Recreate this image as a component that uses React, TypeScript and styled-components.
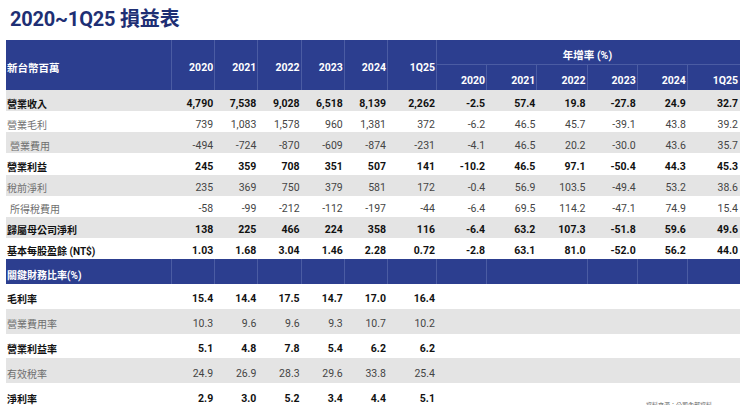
import React from "react";
import styled, { createGlobalStyle } from "styled-components";

const COLS = "166px repeat(5, 43.2px) 49px repeat(5, 50.2px) 1fr";
const FONT = `"Roboto", "Noto Sans CJK TC", sans-serif`;
const BLUE = "#2c3e8f";
const LINE = "#4b5ca3";

const Global = createGlobalStyle`
  html, body { margin: 0; padding: 0; background: #fff; }
  body { font-family: ${FONT}; width: 740px; height: 405px; overflow: hidden; }
`;

const Page = styled.div`
  padding-left: 6px;
`;

const Title = styled.h1`
  margin: 0;
  height: 40px;
  box-sizing: border-box;
  padding: 7px 0 0 4px;
  font: 700 20px/24px ${FONT};
  color: #1e2f74;
  letter-spacing: -0.2px;
`;

const Header = styled.div`
  display: grid;
  grid-template-columns: ${COLS};
  grid-template-rows: 25px 25px;
  background: ${BLUE};
  color: #fff;
  font-weight: 700;
  font-size: 10.5px;
`;

const HCell = styled.div<{ $row: string; $col: string; $align?: "left" | "right" | "center"; $split?: boolean; $last?: boolean }>`
  grid-row: ${(p) => p.$row};
  grid-column: ${(p) => p.$col};
  display: flex;
  align-items: center;
  justify-content: ${(p) => (p.$align === "left" ? "flex-start" : p.$align === "center" ? "center" : "flex-end")};
  padding: 5px ${(p) => (p.$last ? "2px" : "1px")} 0 ${(p) => (p.$align === "left" ? "1px" : "0")};
  border-right: ${(p) => (p.$last ? "none" : `1px solid ${LINE}`)};
  border-bottom: ${(p) => (p.$split ? `1px solid ${LINE}` : "none")};
  box-sizing: border-box;
  font-family: ${FONT};
  white-space: nowrap;
`;

const Row = styled.div<{ $shade?: boolean; $bold?: boolean; $h: number }>`
  display: grid;
  grid-template-columns: ${COLS};
  height: ${(p) => p.$h}px;
  background: ${(p) => (p.$shade ? "#e4e4e4" : "#fff")};
  font-weight: ${(p) => (p.$bold ? 700 : 400)};
  color: ${(p) => (p.$bold ? "#111" : "#444")};
  font-size: 10.5px;
`;

const Label = styled.div<{ $indent?: boolean; $bold?: boolean }>`
  display: flex;
  align-items: center;
  padding: 5px 0 0 ${(p) => (p.$indent ? "4px" : "1px")};
  font-size: 10px;
  color: ${(p) => (p.$bold ? "#111" : "#6f6f6f")};
  white-space: nowrap;
`;

const Cell = styled.div`
  display: flex;
  align-items: center;
  justify-content: flex-end;
  padding: 5px 2px 0 0;
  white-space: nowrap;
`;

const Band = styled.div`
  display: grid;
  grid-template-columns: ${COLS};
  height: 25px;
  background: ${BLUE};
  color: #fff;
  font-weight: 700;
  font-size: 10px;
`;

const BandCell = styled.div<{ $col?: string; $last?: boolean }>`
  grid-column: ${(p) => p.$col || "auto"};
  display: flex;
  align-items: center;
  padding: 6px 0 0 1px;
  border-right: ${(p) => (p.$last ? "none" : `1px solid ${LINE}`)};
  white-space: nowrap;
`;

const Note = styled.div`
  grid-column: 8 / -1;
  align-self: end;
  justify-self: end;
  margin: 0 28px -1px 0;
  font-size: 6px;
  line-height: 8px;
  font-weight: 400;
  color: #666;
  white-space: nowrap;
`;

type Line = { label: string; vals: string[]; growth?: string[]; bold?: boolean; shade?: boolean; indent?: boolean };

const income: Line[] = [
  { label: "營業收入", vals: ["4,790", "7,538", "9,028", "6,518", "8,139", "2,262"], growth: ["-2.5", "57.4", "19.8", "-27.8", "24.9", "32.7"], bold: true, shade: true },
  { label: "營業毛利", vals: ["739", "1,083", "1,578", "960", "1,381", "372"], growth: ["-6.2", "46.5", "45.7", "-39.1", "43.8", "39.2"] },
  { label: "營業費用", vals: ["-494", "-724", "-870", "-609", "-874", "-231"], growth: ["-4.1", "46.5", "20.2", "-30.0", "43.6", "35.7"], shade: true, indent: true },
  { label: "營業利益", vals: ["245", "359", "708", "351", "507", "141"], growth: ["-10.2", "46.5", "97.1", "-50.4", "44.3", "45.3"], bold: true },
  { label: "稅前淨利", vals: ["235", "369", "750", "379", "581", "172"], growth: ["-0.4", "56.9", "103.5", "-49.4", "53.2", "38.6"], shade: true },
  { label: "所得稅費用", vals: ["-58", "-99", "-212", "-112", "-197", "-44"], growth: ["-6.4", "69.5", "114.2", "-47.1", "74.9", "15.4"], indent: true },
  { label: "歸屬母公司淨利", vals: ["138", "225", "466", "224", "358", "116"], growth: ["-6.4", "63.2", "107.3", "-51.8", "59.6", "49.6"], bold: true, shade: true },
  { label: "基本每股盈餘 (NT$)", vals: ["1.03", "1.68", "3.04", "1.46", "2.28", "0.72"], growth: ["-2.8", "63.1", "81.0", "-52.0", "56.2", "44.0"], bold: true },
];

const ratios: Line[] = [
  { label: "毛利率", vals: ["15.4", "14.4", "17.5", "14.7", "17.0", "16.4"], bold: true },
  { label: "營業費用率", vals: ["10.3", "9.6", "9.6", "9.3", "10.7", "10.2"], shade: true },
  { label: "營業利益率", vals: ["5.1", "4.8", "7.8", "5.4", "6.2", "6.2"], bold: true },
  { label: "有效稅率", vals: ["24.9", "26.9", "28.3", "29.6", "33.8", "25.4"], shade: true },
  { label: "淨利率", vals: ["2.9", "3.0", "5.2", "3.4", "4.4", "5.1"], bold: true },
];

const years = ["2020", "2021", "2022", "2023", "2024", "1Q25"];

export default function App() {
  return (
    <Page>
      <Global />
      <Title>2020~1Q25 損益表</Title>
      <Header>
        <HCell $row="1 / 3" $col="1" $align="left">新台幣百萬</HCell>
        {years.map((y, i) => (
          <HCell key={y} $row="1 / 3" $col={String(i + 2)}>{y}</HCell>
        ))}
        <HCell $row="1" $col="8 / -1" $align="center" $split $last>年增率 (%)</HCell>
        {years.map((y, i) => (
          <HCell key={"g" + y} $row="2" $col={String(i + 8)} $last={i === 5}>{y}</HCell>
        ))}
      </Header>
      {income.map((r) => (
        <Row key={r.label} $h={21.125} $shade={r.shade} $bold={r.bold}>
          <Label $indent={r.indent} $bold={r.bold}>{r.label}</Label>
          {r.vals.map((v, i) => (
            <Cell key={i}>{v}</Cell>
          ))}
          {r.growth!.map((v, i) => (
            <Cell key={"g" + i}>{v}</Cell>
          ))}
        </Row>
      ))}
      <Band>
        <BandCell>關鍵財務比率(%)</BandCell>
        <BandCell />
        <BandCell />
        <BandCell />
        <BandCell />
        <BandCell />
        <BandCell />
        <BandCell />
        <BandCell $col="span 2" />
        <BandCell />
        <BandCell />
        <BandCell $last />
      </Band>
      {ratios.map((r, idx) => (
        <Row key={r.label} $h={24.8} $shade={r.shade} $bold={r.bold}>
          <Label $bold={r.bold}>{r.label}</Label>
          {r.vals.map((v, i) => (
            <Cell key={i}>{v}</Cell>
          ))}
          {idx === ratios.length - 1 && <Note>資料來源：公司內部資料</Note>}
        </Row>
      ))}
    </Page>
  );
}
